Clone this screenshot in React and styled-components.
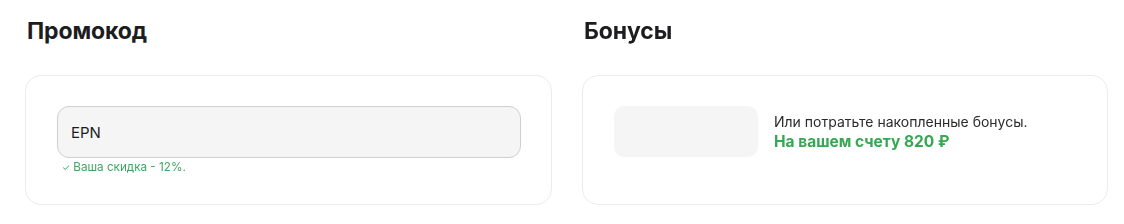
import React, { useState } from "react";
import styled, { createGlobalStyle } from "styled-components";

const GlobalStyle = createGlobalStyle`
  body {
    margin: 0;
    background: #ffffff;
    font-family: Inter, "Noto Sans", sans-serif;
    color: #1d1d1f;
  }
`;

export default function App() {
  const [code, setCode] = useState("EPN");

  return (
    <Page>
      <GlobalStyle />
      <Column>
        <Title>Промокод</Title>
        <Card>
          <PromoWrap>
            <PromoInput autoFocus value={code} onChange={(e) => setCode(e.target.value)} />
            <Hint>
              <span>✓</span> Ваша скидка - 12%.
            </Hint>
          </PromoWrap>
        </Card>
      </Column>

      <Column>
        <Title>Бонусы</Title>
        <Card>
          <BonusRow>
            <Placeholder />
            <BonusText>
              <p>Или потратьте накопленные бонусы.</p>
              <Balance>На вашем счету 820 ₽</Balance>
            </BonusText>
          </BonusRow>
        </Card>
      </Column>
    </Page>
  );
}

const Page = styled.div`
  display: grid;
  grid-template-columns: 527px 526px;
  gap: 30px;
  padding: 17px 16px 0 25px;
`;

const Column = styled.section`
  display: flex;
  flex-direction: column;
`;

const Title = styled.h2`
  margin: 0 0 0 2px;
  height: 58px;
  font-size: 23px;
  line-height: 28px;
  font-weight: 700;
  letter-spacing: -0.1px;
  color: #1d1d1f;
`;

const Card = styled.div`
  box-sizing: border-box;
  height: 130px;
  border: 1px solid #ececec;
  border-radius: 16px;
  padding: 30px 30px 0 31px;
`;

const PromoWrap = styled.div`
  display: flex;
  flex-direction: column;
`;

const PromoInput = styled.input`
  box-sizing: border-box;
  width: 464px;
  height: 52px;
  padding: 0 16px 0 13px;
  border: 1px solid #cfcfcf;
  border-radius: 12px;
  background: #f5f5f5;
  font-family: Inter, "Noto Sans", sans-serif;
  font-size: 15px;
  color: #1d1d1f;
  outline: none;
  caret-color: #1d1d1f;
`;

const Hint = styled.div`
  margin: 2px 0 0 5px;
  font-size: 11.7px;
  line-height: 14px;
  color: #3fa563;

  span {
    font-size: 9px;
  }
`;

const BonusRow = styled.div`
  display: flex;
  align-items: center;
  gap: 16px;
`;

const Placeholder = styled.div`
  width: 144px;
  height: 51px;
  border-radius: 10px;
  background: #f5f5f5;
  flex-shrink: 0;
`;

const BonusText = styled.div`
  display: flex;
  flex-direction: column;
  gap: 1px;

  p {
    margin: 0;
    font-size: 14px;
    line-height: 19px;
    color: #2b2b2b;
  }
`;

const Balance = styled.p`
  && {
    font-size: 15.5px;
    font-weight: 700;
    color: #34a853;
  }
`;
